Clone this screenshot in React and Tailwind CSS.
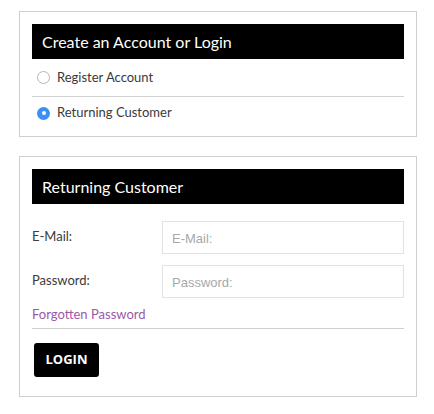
export default function App() {
  return (
    <div className="w-[434px] h-[414px] bg-white pt-[11px] pl-[19px] font-['Lato','Liberation_Sans',sans-serif] text-[13px] text-[#3a3a3a]">
      {/* Account type */}
      <div className="w-[398px] border border-[#cfcfcf] px-[12px] pt-[12px] pb-[7px]">
        <h2 className="h-[35px] bg-black text-white text-[16px] leading-[35px] pl-[10px]">Create an Account or Login</h2>
        <label className="flex items-center gap-[7px] h-[38px] pl-[5px] border-b border-[#d2d2d2]">
          <span className="w-[13px] h-[13px] rounded-full border border-[#b5b5b5] bg-white shrink-0" />
          <span>Register Account</span>
        </label>
        <label className="flex items-center gap-[7px] h-[32px] pl-[5px]">
          <span className="w-[13px] h-[13px] rounded-full bg-[#3b8ff5] flex items-center justify-center shrink-0">
            <span className="w-[4px] h-[4px] rounded-full bg-white" />
          </span>
          <span>Returning Customer</span>
        </label>
      </div>

      {/* Login form */}
      <div className="w-[398px] mt-[19px] border border-[#cfcfcf] px-[12px] pt-[12px] pb-[19px]">
        <h2 className="h-[35px] bg-black text-white text-[16px] leading-[35px] pl-[10px]">Returning Customer</h2>
        <div className="flex mt-[17px]">
          <span className="w-[130px] pt-[6px]">E-Mail:</span>
          <input
            type="text"
            placeholder="E-Mail:"
            className="flex-1 h-[33px] border border-[#e2e2e2] px-[9px] pt-[2px] text-[13px] font-['Liberation_Sans',sans-serif] placeholder:text-[#a8a8a8] outline-none"
          />
        </div>
        <div className="flex mt-[11px]">
          <span className="w-[130px] pt-[6px]">Password:</span>
          <input
            type="password"
            placeholder="Password:"
            className="flex-1 h-[33px] border border-[#e2e2e2] px-[9px] pt-[2px] text-[13px] font-['Liberation_Sans',sans-serif] placeholder:text-[#a8a8a8] outline-none"
          />
        </div>
        <div className="h-[31px] pt-[7px] border-b border-[#cfcfcf]">
          <a href="#" className="text-[#9b59a6]">Forgotten Password</a>
        </div>
        <button className="mt-[14px] ml-[2px] w-[65px] h-[34px] bg-black rounded-[3px] text-white text-[13px] font-bold font-['Open_Sans',sans-serif]">
          LOGIN
        </button>
      </div>
    </div>
  )
}
